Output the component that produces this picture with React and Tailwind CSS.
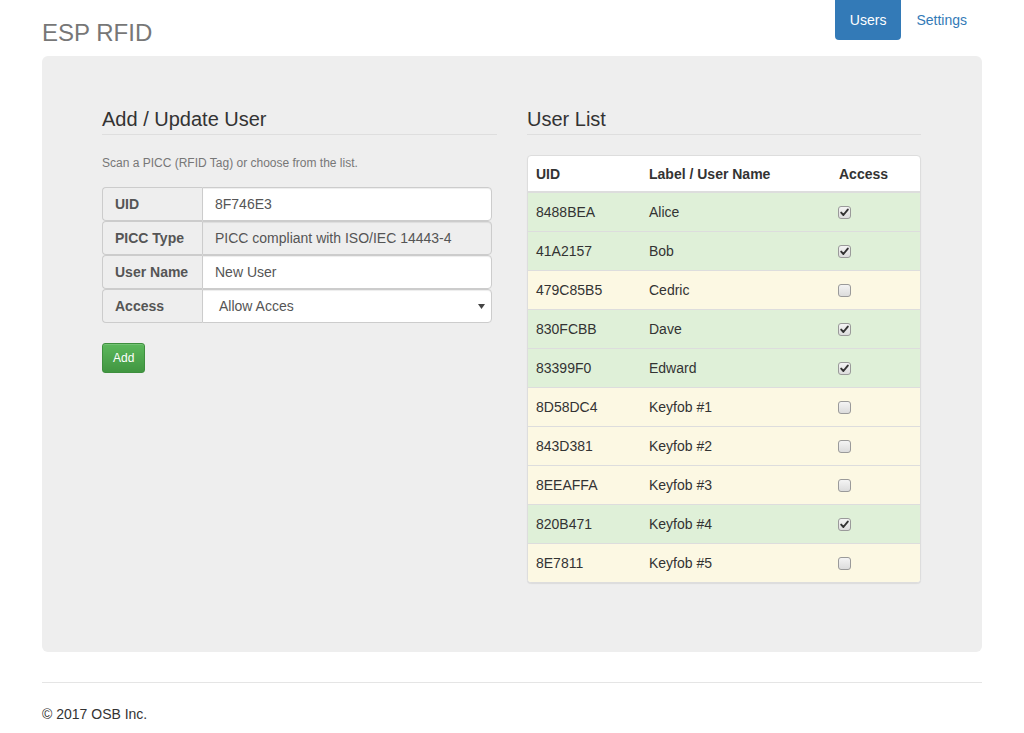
import React from "react";

const users = [
  ["8488BEA", "Alice", true],
  ["41A2157", "Bob", true],
  ["479C85B5", "Cedric", false],
  ["830FCBB", "Dave", true],
  ["83399F0", "Edward", true],
  ["8D58DC4", "Keyfob #1", false],
  ["843D381", "Keyfob #2", false],
  ["8EEAFFA", "Keyfob #3", false],
  ["820B471", "Keyfob #4", true],
  ["8E7811", "Keyfob #5", false],
];

function Check({ on }) {
  return (
    <span className="inline-flex h-[13px] w-[13px] items-center justify-center rounded-[3px] border border-[#9a9a9a] bg-gradient-to-b from-[#f4f4f4] to-[#dcdcdc]">
      {on && (
        <svg width="9" height="9" viewBox="0 0 9 9">
          <path d="M1.2 4.6 L3.4 7 L7.8 1.6" stroke="#333" strokeWidth="1.9" fill="none" strokeLinecap="round" strokeLinejoin="round" />
        </svg>
      )}
    </span>
  );
}

function Group({ label, children, disabled }) {
  return (
    <div className="flex h-[34px] w-[390px]">
      <div className="flex w-[100px] shrink-0 items-center rounded-l-[4px] border border-r-0 border-[#ccc] bg-[#eee] px-[12px] text-[14px] font-bold text-[#555]">
        {label}
      </div>
      <div
        className={
          "flex flex-1 items-center rounded-r-[4px] border border-[#ccc] px-[12px] text-[14px] text-[#555] shadow-[inset_0_1px_1px_rgba(0,0,0,0.075)] " +
          (disabled ? "bg-[#eee]" : "bg-white")
        }
      >
        {children}
      </div>
    </div>
  );
}

export default function App() {
  return (
    <div
      className="min-h-[733px] bg-white text-[#333]"
      style={{ fontFamily: '"Liberation Sans", Arial, sans-serif' }}
    >
      <div className="mx-auto w-[940px]">
        <header className="flex h-[56px] items-start justify-between">
          <h3 className="pt-[13px] text-[24px] leading-[40px] text-[#777]">ESP RFID</h3>
          <nav className="flex items-start">
            <a className="flex h-[40px] items-center rounded-b-[4px] bg-[#337ab7] px-[15px] text-[14px] text-white">
              Users
            </a>
            <a className="flex h-[40px] items-center px-[15px] text-[14px] text-[#337ab7]">Settings</a>
          </nav>
        </header>

        <main className="flex h-[596px] gap-[30px] rounded-[6px] bg-[#eee] pl-[60px] pt-[52px]">
          <section className="w-[395px]">
            <h4 className="border-b border-[#dedede] pb-[4px] text-[20px] leading-[22px] text-[#333]">
              Add / Update User
            </h4>
            <p className="mt-[20px] text-[12px] leading-[17px] text-[#777]">
              Scan a PICC (RFID Tag) or choose from the list.
            </p>
            <div className="mt-[15px] flex flex-col">
              <Group label="UID">8F746E3</Group>
              <Group label="PICC Type" disabled>
                PICC compliant with ISO/IEC 14443-4
              </Group>
              <Group label="User Name">New User</Group>
              <Group label="Access">
                <span className="flex-1 pl-[4px]">Allow Acces</span>
                <svg width="7" height="5" viewBox="0 0 7 5" className="-mr-[6px]">
                  <path d="M0 0 H7 L3.5 5 Z" fill="#444" />
                </svg>
              </Group>
            </div>
            <button className="mt-[20px] h-[30px] rounded-[3px] border border-[#3e8f3e] bg-gradient-to-b from-[#5cb85c] to-[#419641] px-[10px] text-[12px] text-white shadow-[inset_0_1px_0_rgba(255,255,255,0.15)]">
              Add
            </button>
          </section>

          <section className="w-[394px]">
            <h4 className="border-b border-[#dedede] pb-[4px] text-[20px] leading-[22px] text-[#333]">
              User List
            </h4>
            <div className="mt-[20px] overflow-hidden rounded-[4px] border border-[#ddd] bg-white text-[14px] shadow-[0_1px_1px_rgba(0,0,0,0.08)]">
              <div className="flex h-[37px] items-center border-b-2 border-[#ddd] pt-[2px] font-bold">
                <div className="w-[113px] px-[8px]">UID</div>
                <div className="w-[189px] px-[8px]">Label / User Name</div>
                <div className="flex-1 px-[9px]">Access</div>
              </div>
              {users.map(([uid, name, on], i) => (
                <div
                  key={uid}
                  className={
                    "flex items-center " +
                    (i > 0 ? "h-[39px] border-t border-[#ddd] " : "h-[38px] pt-[1px] ") +
                    (on ? "bg-[#dff0d8]" : "bg-[#fcf8e3]")
                  }
                >
                  <div className="w-[113px] px-[8px]">{uid}</div>
                  <div className="w-[189px] px-[8px]">{name}</div>
                  <div className="flex flex-1 items-center px-[8px]">
                    <Check on={on} />
                  </div>
                </div>
              ))}
            </div>
          </section>
        </main>

        <footer className="mt-[30px] border-t border-[#e5e5e5] pt-[21px]">
          <p className="text-[14px] leading-[20px] text-[#333]">© 2017 OSB Inc.</p>
        </footer>
      </div>
    </div>
  );
}
